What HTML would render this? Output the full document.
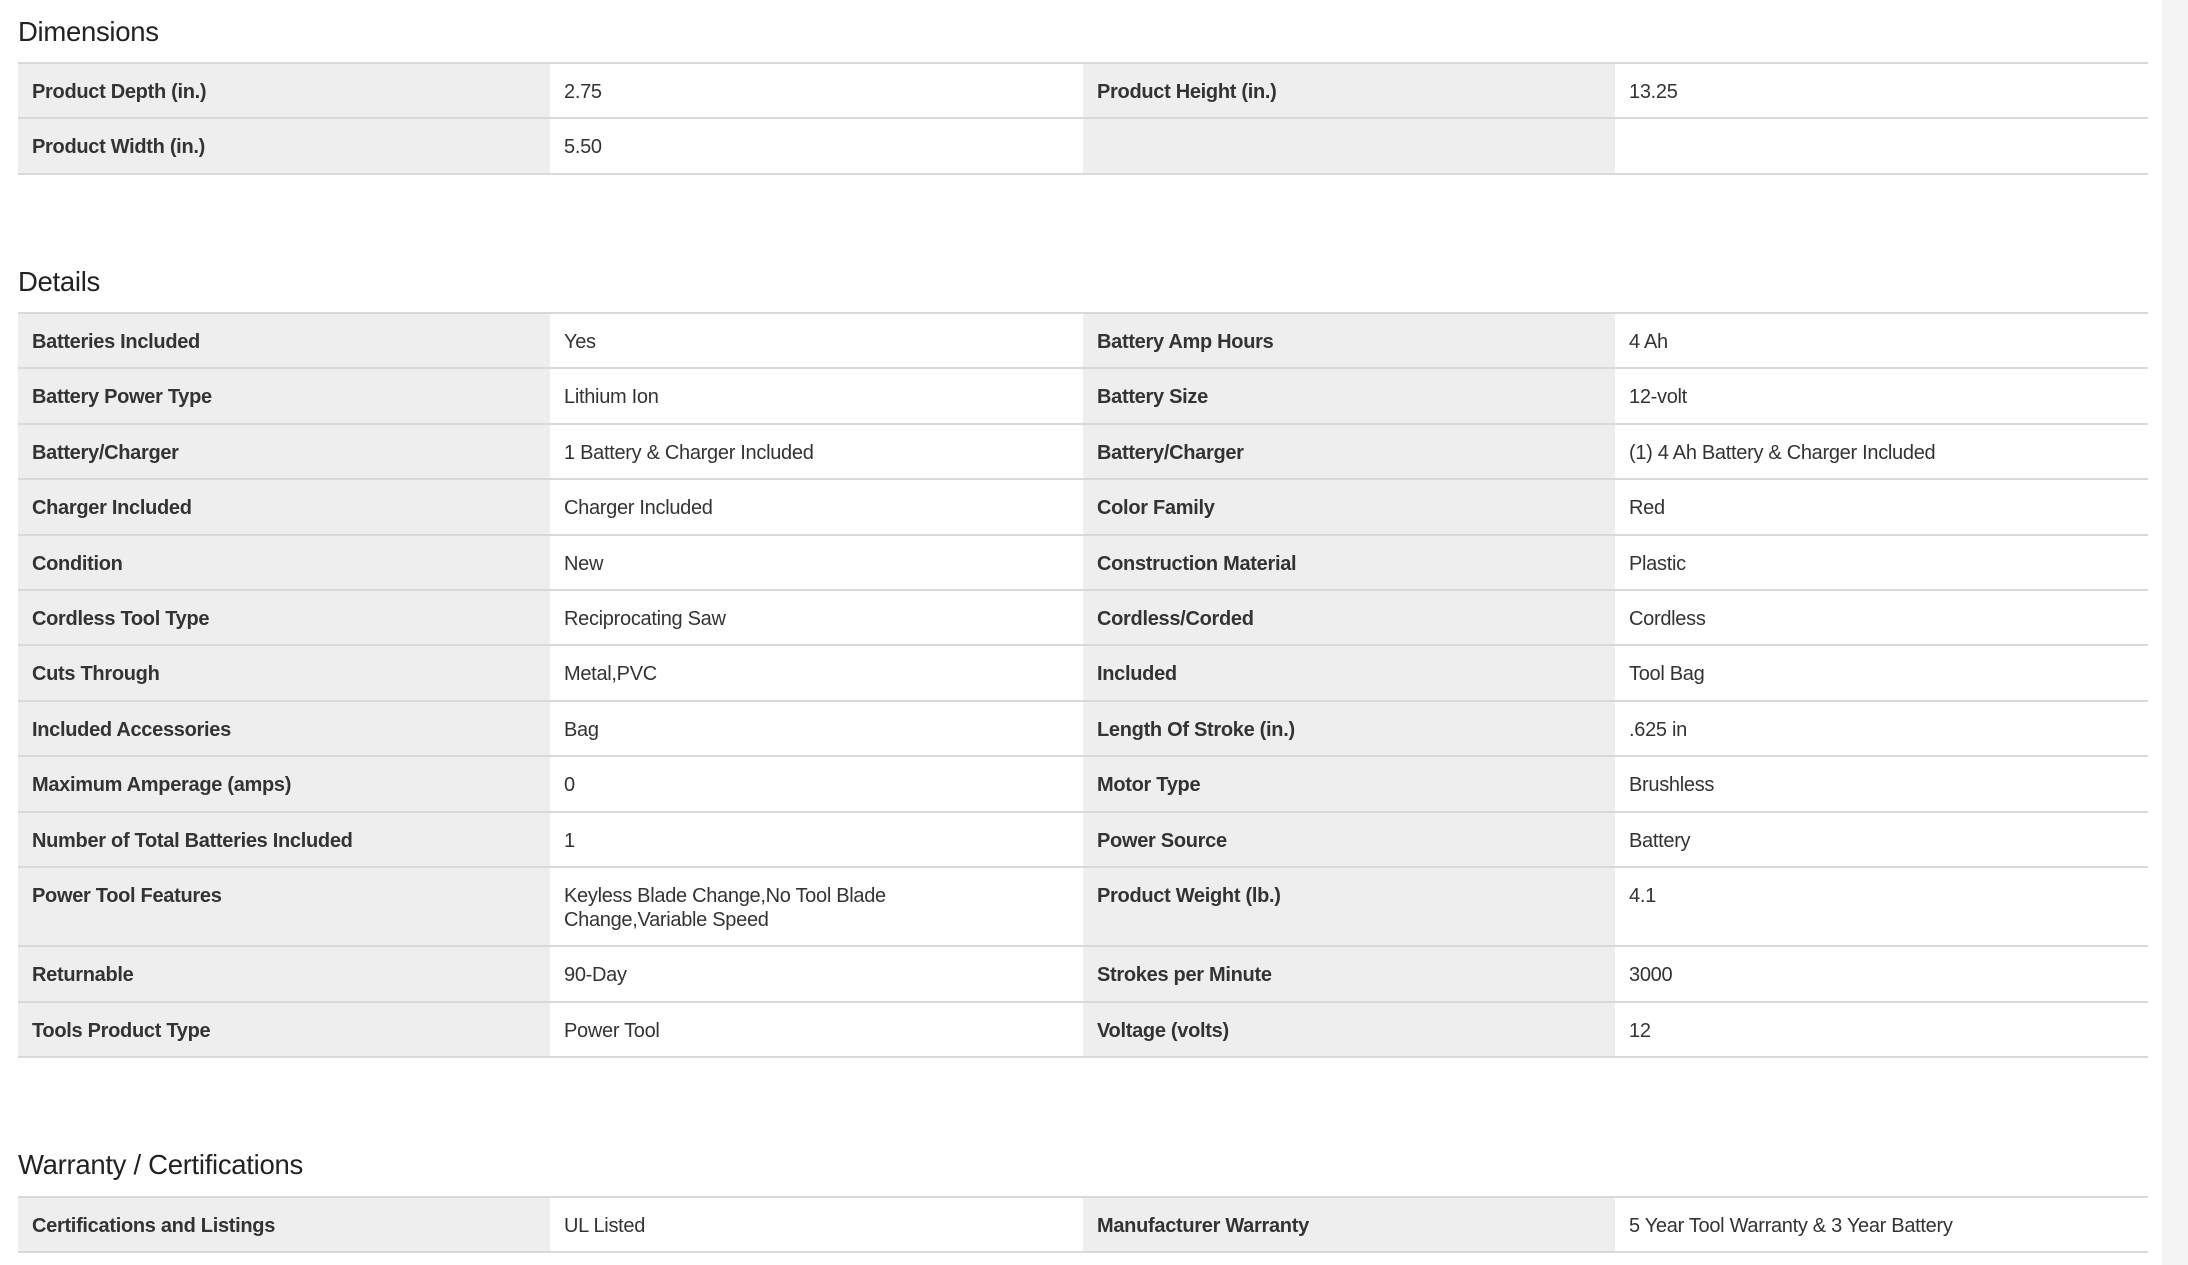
<!DOCTYPE html>
<html><head><meta charset="utf-8"><style>
body{margin:0;width:2188px;height:1265px;background:#fff;font-family:"Liberation Sans",Arial,sans-serif;color:#333;position:relative;overflow:hidden}
.sb{position:absolute;left:2162px;top:0;width:26px;height:1265px;background:#f4f4f4}
h2{position:absolute;left:18px;margin:0;font-size:27.5px;font-weight:normal;line-height:30px;color:#222;letter-spacing:-0.3px}
table{position:absolute;left:18px;width:2130px;border-collapse:collapse;table-layout:fixed;border-top:2px solid #d9d9d9}
td{border-bottom:2px solid #d9d9d9;padding:16px 14px 0 14px;vertical-align:top;font-size:20px;line-height:24px;letter-spacing:-0.3px;height:37.4px;box-sizing:content-box}
td.l{background:#eee;font-weight:bold;color:#333}
tr.tall td{height:61.5px}
</style></head><body>
<div class="sb"></div>
<h2 style="top:17px">Dimensions</h2>
<table style="top:62px">
<colgroup><col style="width:532px"><col style="width:533px"><col style="width:532px"><col style="width:533px"></colgroup>
<tr><td class="l">Product Depth (in.)</td><td>2.75</td><td class="l">Product Height (in.)</td><td>13.25</td></tr>
<tr><td class="l">Product Width (in.)</td><td>5.50</td><td class="l"></td><td></td></tr>
</table>
<h2 style="top:267px">Details</h2>
<table style="top:312px">
<colgroup><col style="width:532px"><col style="width:533px"><col style="width:532px"><col style="width:533px"></colgroup>
<tr><td class="l">Batteries Included</td><td>Yes</td><td class="l">Battery Amp Hours</td><td>4 Ah</td></tr>
<tr><td class="l">Battery Power Type</td><td>Lithium Ion</td><td class="l">Battery Size</td><td>12-volt</td></tr>
<tr><td class="l">Battery/Charger</td><td>1 Battery &amp; Charger Included</td><td class="l">Battery/Charger</td><td>(1) 4 Ah Battery &amp; Charger Included</td></tr>
<tr><td class="l">Charger Included</td><td>Charger Included</td><td class="l">Color Family</td><td>Red</td></tr>
<tr><td class="l">Condition</td><td>New</td><td class="l">Construction Material</td><td>Plastic</td></tr>
<tr><td class="l">Cordless Tool Type</td><td>Reciprocating Saw</td><td class="l">Cordless/Corded</td><td>Cordless</td></tr>
<tr><td class="l">Cuts Through</td><td>Metal,PVC</td><td class="l">Included</td><td>Tool Bag</td></tr>
<tr><td class="l">Included Accessories</td><td>Bag</td><td class="l">Length Of Stroke (in.)</td><td>.625 in</td></tr>
<tr><td class="l">Maximum Amperage (amps)</td><td>0</td><td class="l">Motor Type</td><td>Brushless</td></tr>
<tr><td class="l">Number of Total Batteries Included</td><td>1</td><td class="l">Power Source</td><td>Battery</td></tr>
<tr class="tall"><td class="l">Power Tool Features</td><td>Keyless Blade Change,No Tool Blade<br>Change,Variable Speed</td><td class="l">Product Weight (lb.)</td><td>4.1</td></tr>
<tr><td class="l">Returnable</td><td>90-Day</td><td class="l">Strokes per Minute</td><td>3000</td></tr>
<tr><td class="l">Tools Product Type</td><td>Power Tool</td><td class="l">Voltage (volts)</td><td>12</td></tr>
</table>
<h2 style="top:1150px">Warranty / Certifications</h2>
<table style="top:1196px">
<colgroup><col style="width:532px"><col style="width:533px"><col style="width:532px"><col style="width:533px"></colgroup>
<tr><td class="l">Certifications and Listings</td><td>UL Listed</td><td class="l">Manufacturer Warranty</td><td>5 Year Tool Warranty &amp; 3 Year Battery</td></tr>
</table>
</body></html>
